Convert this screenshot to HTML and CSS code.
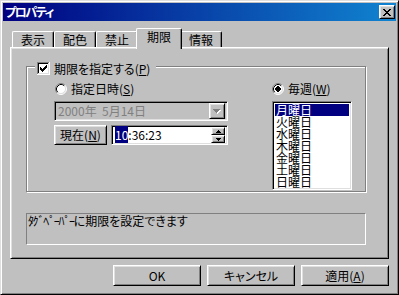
FILE: index.html
```html
<!DOCTYPE html>
<html lang="ja">
<head>
<meta charset="utf-8">
<title>プロパティ</title>
<link rel="stylesheet" href="styles.css">
</head>
<body>
<div class="window">
  <div class="titlebar">
    <span class="title">プロパティ</span>
    <span class="close">
      <svg width="8" height="7" viewBox="0 0 8 7" shape-rendering="crispEdges">
        <path fill="#000" d="M0 0h2v1H0zM6 0h2v1H6zM1 1h2v1H1zM5 1h2v1H5zM2 2h4v1H2zM3 3h2v1H3zM2 4h4v1H2zM1 5h2v1H1zM5 5h2v1H5zM0 6h2v1H0zM6 6h2v1H6z"/>
      </svg>
    </span>
  </div>
  <div class="body">
    <div class="tabs">
      <div class="tab">表示</div>
      <div class="tab">配色</div>
      <div class="tab">禁止</div>
      <div class="tab active">期限</div>
      <div class="tab">情報</div>
    </div>
    <div class="panel">
      <div class="group">
        <div class="legend">
          <svg class="check" width="13" height="13" viewBox="0 0 13 13" shape-rendering="crispEdges">
            <rect width="13" height="13" fill="#fff"/>
            <path fill="#808080" d="M0 0h12v1H1v11H0z"/>
            <path fill="#000" d="M1 1h10v1H2v9H1z"/>
            <path fill="#fff" d="M12 0h1v13H0v-1h12z"/>
            <path fill="#dfdfdf" d="M11 1h1v11H1v-1h10z"/>
            <path fill="#000" d="M9 3h1v1H9zM8 4h2v1H8zM3 5h1v1H3zM7 5h3v1H7zM3 6h2v1H3zM6 6h3v1H6zM3 7h5v1H3zM4 8h3v1H4zM5 9h1v1H5z"/>
          </svg>
          <span class="label">期限を指定する(<u>P</u>)</span>
        </div>
        <div class="group-body">
          <div class="col-left">
            <div class="radio-row first">
              <svg class="radio" width="12" height="12" viewBox="0 0 12 12">
                <circle cx="6" cy="6" r="5" fill="#fff"/>
                <path d="M2.11 9.89A5.5 5.5 0 0 1 9.89 2.11" fill="none" stroke="#808080"/>
                <path d="M9.89 2.11A5.5 5.5 0 0 1 2.11 9.89" fill="none" stroke="#fff"/>
                <path d="M2.82 9.18A4.5 4.5 0 0 1 9.18 2.82" fill="none" stroke="#000"/>
                <path d="M9.18 2.82A4.5 4.5 0 0 1 2.82 9.18" fill="none" stroke="#dfdfdf"/>
              </svg>
              <span class="label">指定日時(<u>S</u>)</span>
            </div>
            <div class="combo">
              <span class="combo-text">2000年&nbsp;&nbsp;5月14日</span>
              <span class="combo-btn">
                <svg width="8" height="5" viewBox="0 0 8 5" shape-rendering="crispEdges">
                  <path fill="#fff" d="M1 1h7v1H1zM2 2h5v1H2zM3 3h3v1H3zM4 4h1v1H4z"/>
                  <path fill="#808080" d="M0 0h7v1H0zM1 1h5v1H1zM2 2h3v1H2zM3 3h1v1H3z"/>
                </svg>
              </span>
            </div>
            <div class="time-row">
              <div class="btn now">現在(<u>N</u>)</div>
              <div class="edit">
                <span class="edit-text"><span class="sel">10</span>:36:23</span>
                <span class="spin">
                  <span class="spin-btn">
                    <svg width="5" height="3" viewBox="0 0 5 3" shape-rendering="crispEdges"><path fill="#000" d="M2 0h1v1H2zM1 1h3v1H1zM0 2h5v1H0z"/></svg>
                  </span>
                  <span class="spin-btn">
                    <svg width="5" height="3" viewBox="0 0 5 3" shape-rendering="crispEdges"><path fill="#000" d="M0 0h5v1H0zM1 1h3v1H1zM2 2h1v1H2z"/></svg>
                  </span>
                </span>
              </div>
            </div>
          </div>
          <div class="col-right">
            <div class="radio-row">
              <svg class="radio" width="12" height="12" viewBox="0 0 12 12">
                <circle cx="6" cy="6" r="5" fill="#fff"/>
                <path d="M2.11 9.89A5.5 5.5 0 0 1 9.89 2.11" fill="none" stroke="#808080"/>
                <path d="M9.89 2.11A5.5 5.5 0 0 1 2.11 9.89" fill="none" stroke="#fff"/>
                <path d="M2.82 9.18A4.5 4.5 0 0 1 9.18 2.82" fill="none" stroke="#000"/>
                <path d="M9.18 2.82A4.5 4.5 0 0 1 2.82 9.18" fill="none" stroke="#dfdfdf"/>
                <rect x="4" y="4" width="4" height="4" fill="#000" shape-rendering="crispEdges"/>
                <rect x="5" y="3" width="2" height="6" fill="#000" shape-rendering="crispEdges"/>
                <rect x="3" y="5" width="6" height="2" fill="#000" shape-rendering="crispEdges"/>
              </svg>
              <span class="label">毎週(<u>W</u>)</span>
            </div>
            <div class="list">
              <div class="item selected">月曜日</div>
              <div class="item">火曜日</div>
              <div class="item">水曜日</div>
              <div class="item">木曜日</div>
              <div class="item">金曜日</div>
              <div class="item">土曜日</div>
              <div class="item">日曜日</div>
            </div>
          </div>
        </div>
      </div>
      <div class="status"><span class="hw">ﾀｸﾞﾍﾟｰﾊﾟｰ</span>に期限を設定できます</div>
    </div>
    <div class="buttons">
      <div class="btn action">OK</div>
      <div class="btn action">キャンセル</div>
      <div class="btn action">適用(<u>A</u>)</div>
    </div>
  </div>
</div>
</body>
</html>
```

FILE: styles.css
```css
* { box-sizing: border-box; }
html, body { margin: 0; padding: 0; }
body {
  width: 399px;
  height: 295px;
  background: #c0c0c0;
  color: #000;
  font-family: "Noto Sans CJK JP", "Noto Sans", sans-serif;
  font-size: 12px;
  line-height: 12px;
  font-feature-settings: "palt";
  overflow: hidden;
}
u { text-decoration: underline; text-underline-offset: 1px; }

.window {
  width: 399px;
  height: 295px;
  background: #c0c0c0;
  border: 1px solid;
  border-color: #dfdfdf #000 #000 #dfdfdf;
  box-shadow: inset 1px 1px #fff, inset -1px -1px #808080;
  padding: 2px;
  display: flex;
  flex-direction: column;
}

.titlebar {
  height: 18px;
  flex: none;
  display: flex;
  align-items: center;
  justify-content: space-between;
  padding: 0 1px 0 2px;
  background: linear-gradient(to right, #000080, #1084d0);
}
.title {
  color: #fff;
  font-weight: bold;
  font-size: 12px;
  line-height: 12px;
  letter-spacing: -1.5px;
}

.close, .btn, .combo-btn, .spin-btn {
  background: #c0c0c0;
  border: 1px solid;
  border-color: #fff #000 #000 #fff;
  box-shadow: inset 1px 1px #dfdfdf, inset -1px -1px #808080;
  display: flex;
  align-items: center;
  justify-content: center;
}
.close { width: 16px; height: 14px; }

.body {
  flex: 1;
  display: flex;
  flex-direction: column;
  padding: 7px 7px 0;
}

.tabs {
  display: flex;
  align-items: flex-end;
  height: 19px;
  padding-left: 2px;
}
.tab {
  width: 42px;
  height: 16px;
  border-left: 1px solid #fff;
  border-top: 1px solid #fff;
  border-right: 1px solid #000;
  border-radius: 2px 2px 0 0;
  box-shadow: inset -1px 0 #808080;
  background: #c0c0c0;
  text-align: center;
  padding-top: 2px;
  line-height: 12px;
}
.tab.active {
  width: 46px;
  height: 21px;
  margin: 0 -2px -2px;
  position: relative;
  z-index: 1;
}

.panel {
  height: 212px;
  flex: none;
  border: 1px solid;
  border-color: #fff #000 #000 #fff;
  box-shadow: inset 1px 1px #dfdfdf, inset -1px -1px #808080;
  padding: 18px 0 0 15px;
}

.group {
  width: 340px;
  height: 126px;
  border: 1px solid #808080;
  box-shadow: inset 1px 1px #fff, 1px 1px #fff;
}
.legend {
  display: inline-flex;
  align-items: center;
  gap: 4px;
  height: 13px;
  margin: -5px 0 0 8px;
  padding: 0 6px 0 2px;
  background: #c0c0c0;
  vertical-align: top;
}
.label { line-height: 13px; white-space: nowrap; }
.check { display: block; flex: none; }

.group-body {
  display: flex;
  padding-left: 27px;
  margin-top: 3px;
}
.col-left { width: 174px; display: flex; flex-direction: column; }
.col-right { width: 80px; margin-left: 44px; display: flex; flex-direction: column; }

.radio-row {
  display: flex;
  align-items: center;
  gap: 4px;
  height: 13px;
}
.radio-row.first { padding-left: 1px; }
.radio { display: block; flex: none; }

.combo, .edit, .list {
  border: 1px solid;
  border-color: #808080 #fff #fff #808080;
  box-shadow: inset 1px 1px #000, inset -1px -1px #dfdfdf;
}
.combo {
  margin-top: 6px;
  height: 20px;
  background: #c0c0c0;
  display: flex;
  align-items: center;
  justify-content: space-between;
  padding: 2px 2px 2px 3px;
  color: #808080;
}
.combo-text { white-space: nowrap; }
.combo-btn { width: 16px; height: 16px; }

.time-row {
  margin-top: 4px;
  display: flex;
  gap: 4px;
  height: 20px;
}
.btn.now { width: 53px; height: 20px; white-space: nowrap; }
.edit {
  width: 117px;
  height: 20px;
  background: #fff;
  display: flex;
  align-items: center;
  justify-content: space-between;
  padding: 2px;
}
.edit-text { padding-left: 1px; white-space: nowrap; }
.sel { background: #000080; color: #fff; }
.spin { display: flex; flex-direction: column; width: 14px; height: 16px; }
.spin-btn { width: 14px; height: 8px; }

.list {
  margin-top: 6px;
  height: 89px;
  background: #fff;
  padding: 2px;
}
.item { height: 12px; line-height: 12px; padding-left: 1px; white-space: nowrap; }
.item.selected { background: #000080; color: #fff; }

.status {
  margin-top: 21px;
  width: 340px;
  height: 32px;
  border: 1px solid;
  border-color: #808080 #fff #fff #808080;
  padding: 1px 0 0 1px;
  white-space: nowrap;
}
.hw { font-feature-settings: normal; letter-spacing: -1.4px; }

.buttons {
  margin-top: 6px;
  display: flex;
  justify-content: flex-end;
  gap: 6px;
}
.btn.action { width: 88px; height: 21px; }
```
